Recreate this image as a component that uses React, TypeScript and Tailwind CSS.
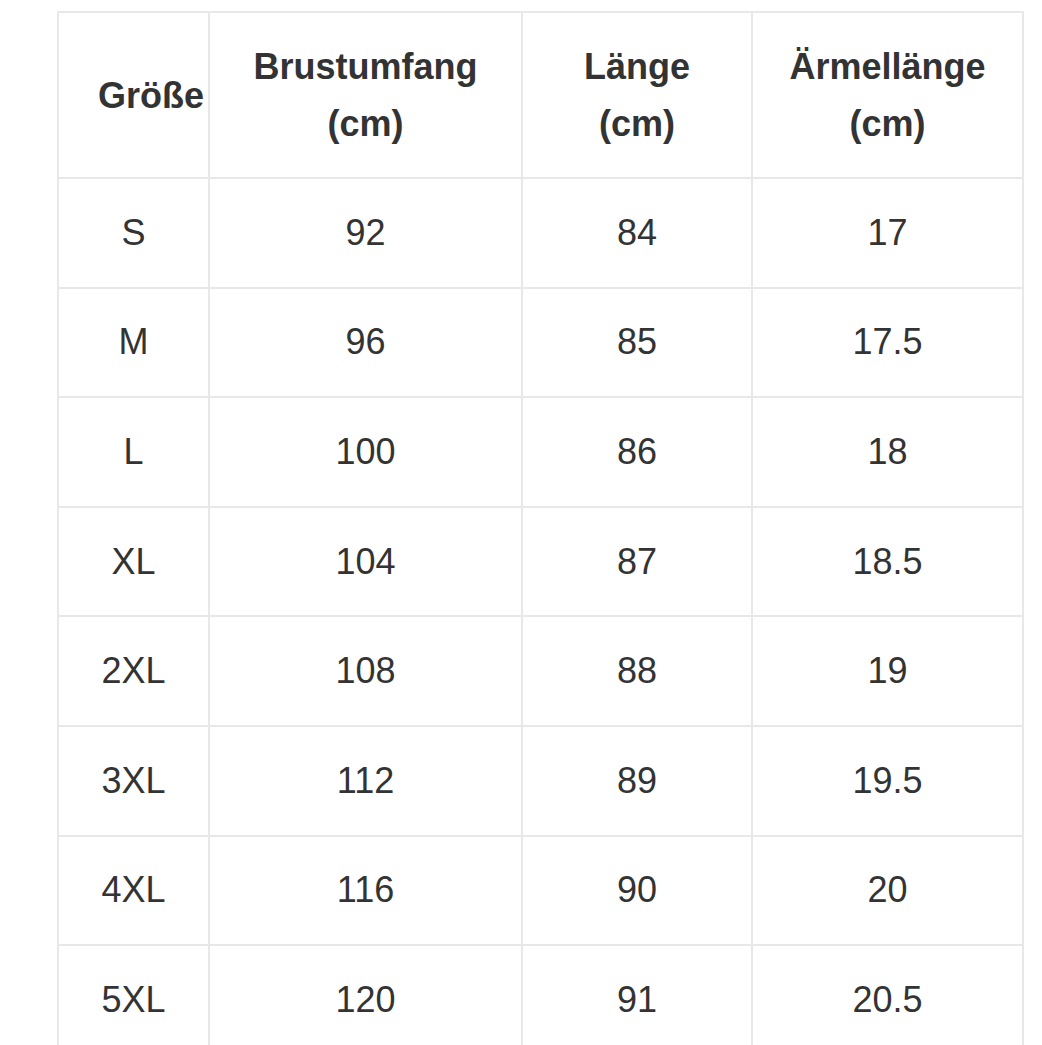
import React from 'react';

const rows = [
  ['S', '92', '84', '17'],
  ['M', '96', '85', '17.5'],
  ['L', '100', '86', '18'],
  ['XL', '104', '87', '18.5'],
  ['2XL', '108', '88', '19'],
  ['3XL', '112', '89', '19.5'],
  ['4XL', '116', '90', '20'],
  ['5XL', '120', '91', '20.5'],
];

const App = () => {
  return (
    <div className="min-h-[1045px] bg-white pt-[11px] pl-[57px] font-['Liberation_Sans',Arial,sans-serif] text-[#333]">
      <div className="grid w-[967px] grid-cols-[149px_311px_228px_269px] gap-[2px] bg-[#e8e8e8] p-[2px]">
        {/* Header */}
        <div className="flex h-[164px] items-center bg-white pl-[39px] text-[36px] font-bold leading-[57px] whitespace-nowrap">
          Größe
        </div>
        <div className="flex h-[164px] items-center justify-center bg-white text-center text-[36px] font-bold leading-[57px]">
          Brustumfang<br />(cm)
        </div>
        <div className="flex h-[164px] items-center justify-center bg-white text-center text-[36px] font-bold leading-[57px]">
          Länge<br />(cm)
        </div>
        <div className="flex h-[164px] items-center justify-center bg-white text-center text-[36px] font-bold leading-[57px]">
          Ärmellänge<br />(cm)
        </div>

        {rows.map((r, i) =>
          r.map((c, j) => (
            <div key={i + '-' + j} className="flex h-[107.6px] items-center justify-center bg-white text-[36px] leading-none">
              {c}
            </div>
          ))
        )}
      </div>
    </div>
  );
};

export default App;
